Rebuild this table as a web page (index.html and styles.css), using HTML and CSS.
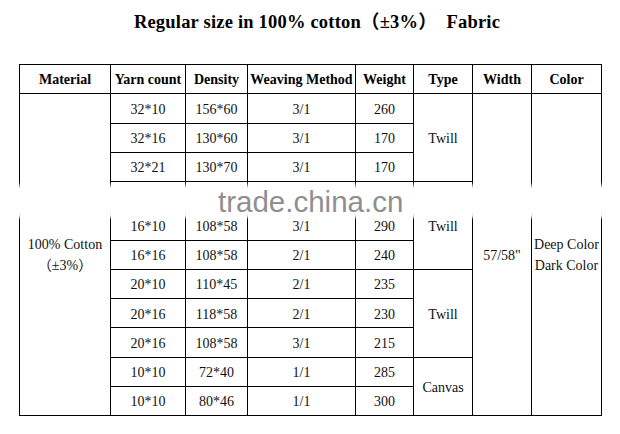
FILE: index.html
```html
<!DOCTYPE html>
<html>
<head>
<meta charset="utf-8">
<link rel="stylesheet" href="styles.css">
</head>
<body>
<div class="page">
  <h1 class="title">Regular size in 100% cotton（±3%）&nbsp; Fabric</h1>
  <table class="spec">
    <colgroup>
      <col class="c-mat"><col class="c-yarn"><col class="c-den"><col class="c-weave"><col class="c-wt"><col class="c-type"><col class="c-width"><col class="c-color">
    </colgroup>
    <thead>
      <tr>
        <th>Material</th><th>Yarn count</th><th>Density</th><th>Weaving Method</th><th>Weight</th><th>Type</th><th>Width</th><th>Color</th>
      </tr>
    </thead>
    <tbody>
      <tr>
        <td rowspan="11" class="two">100% Cotton<br>（±3%）</td>
        <td>32*10</td><td>156*60</td><td>3/1</td><td>260</td>
        <td rowspan="3">Twill</td>
        <td rowspan="11">57/58"</td>
        <td rowspan="11" class="two">Deep Color<br>Dark Color</td>
      </tr>
      <tr><td>32*16</td><td>130*60</td><td>3/1</td><td>170</td></tr>
      <tr><td>32*21</td><td>130*70</td><td>3/1</td><td>170</td></tr>
      <tr><td></td><td></td><td></td><td></td><td rowspan="3">Twill</td></tr>
      <tr><td>16*10</td><td>108*58</td><td>3/1</td><td>290</td></tr>
      <tr><td>16*16</td><td>108*58</td><td>2/1</td><td>240</td></tr>
      <tr><td>20*10</td><td>110*45</td><td>2/1</td><td>235</td><td rowspan="3">Twill</td></tr>
      <tr><td>20*16</td><td>118*58</td><td>2/1</td><td>230</td></tr>
      <tr><td>20*16</td><td>108*58</td><td>3/1</td><td>215</td></tr>
      <tr><td>10*10</td><td>72*40</td><td>1/1</td><td>285</td><td rowspan="2">Canvas</td></tr>
      <tr><td>10*10</td><td>80*46</td><td>1/1</td><td>300</td></tr>
    </tbody>
  </table>
  <div class="band"></div>
  <div class="watermark">trade.china.cn</div>
</div>
</body>
</html>
```
FILE: styles.css
```css
html, body {
  margin: 0;
  padding: 0;
  background: #fff;
}
.page {
  position: relative;
  width: 620px;
  height: 434px;
  overflow: hidden;
  font-family: "Liberation Serif", "Noto Sans CJK SC", serif;
  color: #111;
}
.title {
  margin: 12px 0 0 0;
  padding-left: 14px;
  font-size: 18.5px;
  line-height: 20px;
  font-weight: bold;
  letter-spacing: 0.2px;
  text-align: center;
  color: #000;
}
.spec {
  margin: 32px 0 0 19px;
  border-collapse: collapse;
  table-layout: fixed;
  width: 583px;
  border: 1px solid #000;
}
.c-mat { width: 91px; }
.c-yarn { width: 75px; }
.c-den { width: 62px; }
.c-weave { width: 108px; }
.c-wt { width: 58px; }
.c-type { width: 59px; }
.c-width { width: 59px; }
.c-color { width: 70px; }
.spec th, .spec td {
  border: 1px solid #000;
  padding: 0;
  text-align: center;
  vertical-align: middle;
  white-space: nowrap;
}
.spec tr {
  height: 29.25px;
}
.spec th {
  font-size: 14px;
  font-weight: bold;
  padding-top: 1px;
  color: #000;
}
.spec td {
  font-size: 14px;
  line-height: 16px;
  padding-top: 3px;
}
.spec td.two {
  line-height: 21px;
  padding-top: 0;
}
.band {
  position: absolute;
  left: 0;
  top: 182px;
  width: 620px;
  height: 38px;
  background: linear-gradient(to bottom, rgba(255,255,255,0) 0, rgba(255,255,255,0.95) 6px, #fff 10px, #fff 30px, rgba(255,255,255,0.85) 34px, rgba(255,255,255,0) 38px);
}
.watermark {
  position: absolute;
  left: 218px;
  top: 190px;
  font-family: "Liberation Sans", sans-serif;
  font-size: 29.5px;
  line-height: 24px;
  color: #8f8f8f;
}
```
